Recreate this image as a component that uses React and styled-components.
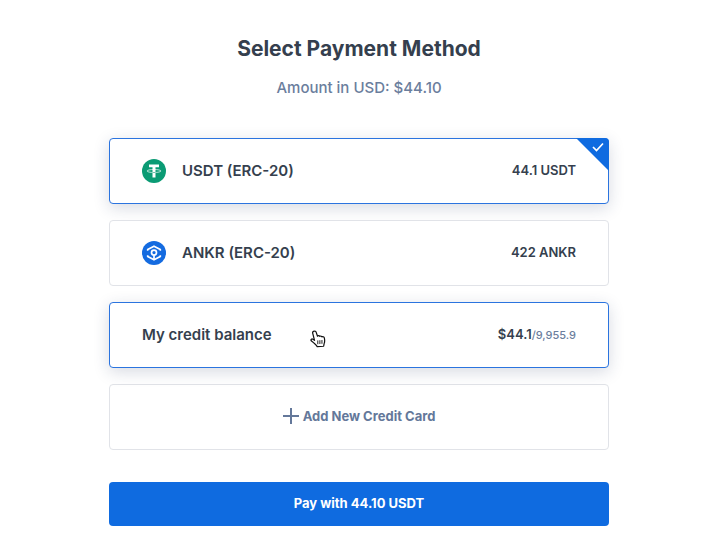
import React, { useState } from "react";
import styled, { createGlobalStyle } from "styled-components";

const GlobalStyle = createGlobalStyle`
  *, *::before, *::after { box-sizing: border-box; }
  body {
    margin: 0;
    background: #fff;
    color: #353f4e;
    font-family: Inter, "Liberation Sans", sans-serif;
  }
`;

const Page = styled.main`
  display: flex;
  justify-content: center;
  padding: 33px 16px 32px 29px;
`;

const Form = styled.form`
  display: flex;
  flex-direction: column;
  width: 100%;
  max-width: 500px;
`;

const Title = styled.h1`
  margin: 0;
  font-size: 21px;
  line-height: 32px;
  font-weight: 700;
  text-align: center;
`;

const Amount = styled.p`
  margin: 11px 0 38px;
  font-size: 15px;
  line-height: 24px;
  font-weight: 500;
  color: #6b7e9d;
  text-align: center;
`;

const Methods = styled.div`
  display: flex;
  flex-direction: column;
  gap: 16px;
  margin-bottom: 32px;
`;

const Method = styled.label`
  position: relative;
  display: flex;
  align-items: center;
  min-height: 66px;
  padding: 0 32px;
  border: 1px solid ${(p) => (p.$active ? "#2b74df" : "#e1e3e8")};
  border-radius: 4px;
  box-shadow: ${(p) => (p.$active ? "0 4px 16px rgba(31, 52, 92, 0.18)" : "none")};
  background: #fff;
  cursor: pointer;
`;

const Radio = styled.input`
  position: absolute;
  inset: 0;
  margin: 0;
  opacity: 0;
  cursor: pointer;
`;

const Coin = styled.svg`
  flex: none;
  width: 24px;
  height: 24px;
  margin-right: 16px;
`;

const Name = styled.span`
  flex: 1;
  font-size: 15px;
  line-height: 24px;
  font-weight: 600;
`;

const Price = styled.span`
  font-size: 13px;
  line-height: 20px;
  font-weight: 600;
  padding-bottom: 2px;
`;

const Total = styled.span`
  font-size: 11px;
  font-weight: 500;
  color: #6b7e9d;
`;

const Corner = styled.svg`
  position: absolute;
  top: -1px;
  right: -1px;
  width: 33px;
  height: 33px;
  border-top-right-radius: 4px;
`;

const Pointer = styled.svg`
  position: absolute;
  left: 200px;
  top: 27px;
  width: 16px;
  height: 18px;
  pointer-events: none;
`;

const AddCard = styled.button`
  display: flex;
  align-items: center;
  justify-content: center;
  gap: 4px;
  min-height: 66px;
  padding: 0 32px 2px;
  border: 1px solid #e1e3e8;
  border-radius: 4px;
  background: #fff;
  color: #64789a;
  font: inherit;
  font-size: 13px;
  line-height: 20px;
  font-weight: 700;
  cursor: pointer;
`;

const Pay = styled.button`
  min-height: 44px;
  padding: 0 24px 2px;
  border: 0;
  border-radius: 4px;
  background: #0f6be0;
  color: #fff;
  font: inherit;
  font-size: 13px;
  line-height: 20px;
  font-weight: 700;
  cursor: pointer;
`;

const Tether = () => (
  <Coin viewBox="0 0 24 24" aria-hidden="true">
    <circle cx="12" cy="12" r="12" fill="#0b9b74" />
    <path d="M7 5.500h10v2.800h-3.500v10.200h-3V8.300H7z" fill="#fff" />
    <ellipse cx="12" cy="12" rx="7" ry="1.500" fill="none" stroke="#fff" strokeWidth="0.7" />
    <path d="M10.500 13.500h3" stroke="#0b9b74" strokeWidth="0.6" />
  </Coin>
);

const Ankr = () => (
  <Coin viewBox="0 0 24 24" aria-hidden="true">
    <circle cx="12" cy="12" r="12" fill="#146be0" />
    <g fill="none" stroke="#fff" strokeWidth="1.700" strokeLinejoin="round">
      <path d="M5.700 9.800V8.400L12 5.200l6.300 3.200v1.400" />
      <path d="M5.700 14.200v1.400L12 18.800l6.300-3.200v-1.400" />
      <circle cx="12" cy="11.600" r="2.500" />
      <path d="M12 14.200v4.200" />
    </g>
  </Coin>
);

const Hand = () => (
  <Pointer viewBox="0 0 17 19" aria-hidden="true">
    <path
      d="M4.200 1.200C5.300.7 6.200 1.300 6.600 2.500L8 6.500c.5-.8 1.900-.7 2.300.2.700-.7 1.900-.4 2.300.5 1-.5 2.300 0 2.600 1.200.5 2 .6 4-.2 6l-.5 2.800-6.800.4c-.9-1.700-2.200-2.700-3.700-4L1.300 11.400c-.8-1 .4-2.400 1.700-1.700l1.800 1.200L2.900 3.500c-.3-1 .3-2 1.300-2.300z"
      fill="#fff"
      stroke="#111"
      strokeWidth="1.300"
      strokeLinejoin="round"
    />
    <path d="M8.300 11v4M10.500 10.800v4M12.700 10.600v4" stroke="#111" strokeWidth="1" />
  </Pointer>
);

const methods = [
  { id: "usdt", name: "USDT (ERC-20)", icon: Tether, price: "44.1 USDT", pay: "44.10 USDT" },
  { id: "ankr", name: "ANKR (ERC-20)", icon: Ankr, price: "422 ANKR", pay: "422 ANKR" },
  { id: "credit", name: "My credit balance", price: "$44.1", total: "/9,955.9", pay: "$44.10", hovered: true },
];

export default function App() {
  const [selected, setSelected] = useState("usdt");
  const current = methods.find((m) => m.id === selected);

  return (
    <Page>
      <GlobalStyle />
      <Form onSubmit={(e) => e.preventDefault()}>
        <Title>Select Payment Method</Title>
        <Amount>Amount in USD: $44.10</Amount>
        <Methods>
          {methods.map(({ id, name, icon: Icon, price, total, hovered }) => (
            <Method key={id} $active={selected === id || hovered}>
              <Radio
                type="radio"
                name="method"
                value={id}
                checked={selected === id}
                onChange={() => setSelected(id)}
              />
              {Icon && <Icon />}
              <Name>{name}</Name>
              <Price>
                {price}
                {total && <Total>{total}</Total>}
              </Price>
              {selected === id && (
                <Corner viewBox="0 0 33 33" aria-hidden="true">
                  <path d="M0 0h33v33z" fill="#0f6be0" />
                  <path d="M17 9l3.500 3.500 6.500-7" fill="none" stroke="#fff" strokeWidth="1.700" />
                </Corner>
              )}
              {hovered && <Hand />}
            </Method>
          ))}
          <AddCard type="button">
            <svg width="16" height="16" viewBox="0 0 16 16" aria-hidden="true">
              <path d="M8 0v16M0 8h16" stroke="currentColor" strokeWidth="2" />
            </svg>
            Add New Credit Card
          </AddCard>
        </Methods>
        <Pay type="submit">Pay with {current.pay}</Pay>
      </Form>
    </Page>
  );
}
